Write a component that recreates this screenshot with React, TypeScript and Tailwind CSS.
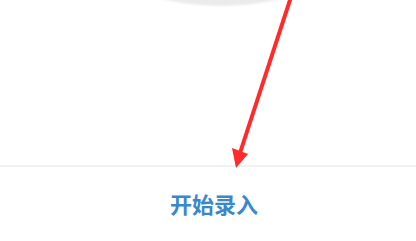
export default function App() {
  return (
    <div className="relative w-[416px] h-[241px] overflow-hidden bg-white flex flex-col font-['Noto_Sans_CJK_SC',sans-serif]">
      <div className="h-[165px] shrink-0 overflow-hidden">
        <div className="w-[510px] h-[510px] -mt-[504px] -ml-[34px] rounded-full bg-[#ebebeb] blur-[1px]" />
      </div>
      <div className="h-[2px] shrink-0 bg-[#f1f1f1]" />
      <div className="flex-1 flex items-center justify-center pb-[2px] pl-[12px]">
        <span className="text-[22px] leading-none font-semibold text-[#3a87c9]">
          开始录入
        </span>
      </div>

      <svg
        className="absolute inset-0 pointer-events-none"
        width="416"
        height="241"
        viewBox="0 0 416 241"
      >
        <line x1="291" y1="-3" x2="240" y2="153" stroke="#ff2b2b" strokeWidth="4" />
        <polygon points="236,168 248,154 232,148" fill="#ff2b2b" />
      </svg>
    </div>
  );
}
